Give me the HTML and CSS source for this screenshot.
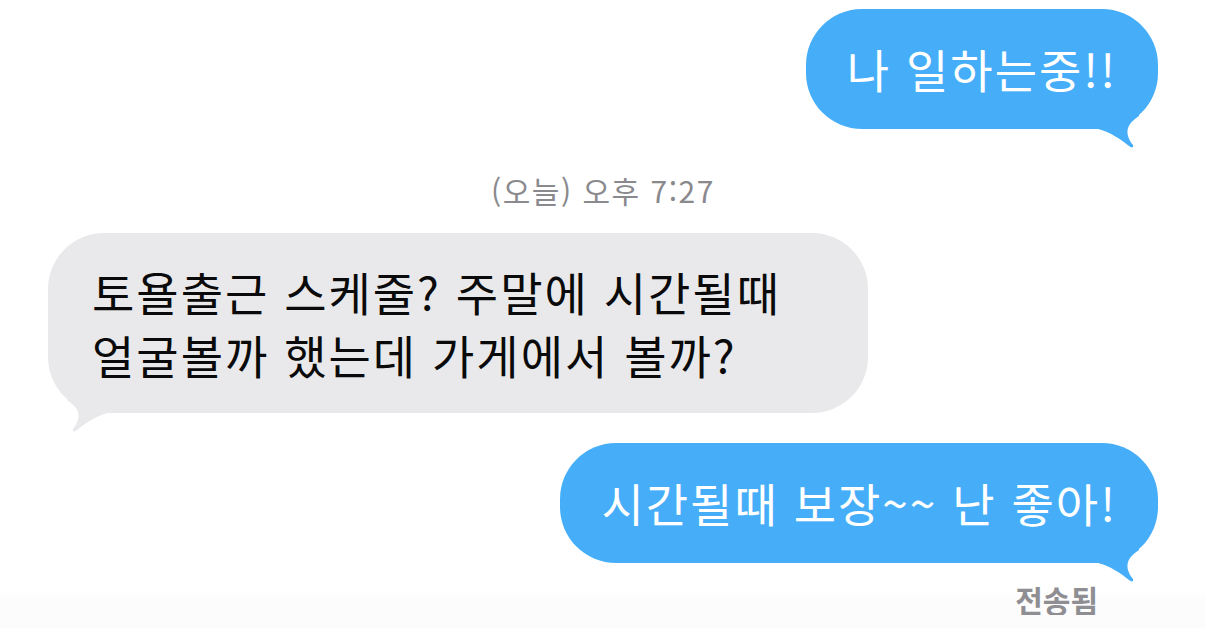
FILE: index.html
```html
<!DOCTYPE html>
<html lang="ko">

<head>
    <meta charset="UTF-8">
    <meta name="viewport" content="width=device-width, initial-scale=1.0">
    <title>메시지</title>
    <link rel="stylesheet" href="styles.css">
</head>

<body>
    <main class="chat">
        <div class="bubble sent">
            나 일하는중!!
            <svg class="tail" viewBox="0 0 60 40" aria-hidden="true">
                <path d="M0,0 L0,20 C12,23 24,31 31,37 C33,39 36,39 35,36 C30,30 27,22 32,15 C34,12 37,10 41,7 L41,0 Z" />
            </svg>
        </div>

        <div class="stamp">(오늘) 오후 7:27</div>

        <div class="bubble received">
            토욜출근 스케줄? 주말에 시간될때 얼굴볼까 했는데 가게에서 볼까?
            <svg class="tail" viewBox="0 0 60 40" aria-hidden="true">
                <path d="M0,0 L0,20 C12,23 24,31 31,37 C33,39 36,39 35,36 C30,30 27,22 32,15 C34,12 37,10 41,7 L41,0 Z" />
            </svg>
        </div>

        <div class="bubble sent second">
            시간될때 보장~~ 난 좋아!
            <svg class="tail" viewBox="0 0 60 40" aria-hidden="true">
                <path d="M0,0 L0,20 C12,23 24,31 31,37 C33,39 36,39 35,36 C30,30 27,22 32,15 C34,12 37,10 41,7 L41,0 Z" />
            </svg>
        </div>

        <div class="status">전송됨</div>
    </main>
</body>

</html>
```

FILE: styles.css
```css
/* 대화 화면 기본 */
html {
    background: linear-gradient(#fff 590px, #fcfcfc 602px);
    min-height: 100%;
}

body {
    margin: 0;
    font-family: "Noto Sans CJK KR", "Noto Sans", sans-serif;
    color: #000;
}

.chat {
    display: flex;
    flex-direction: column;
    padding: 9px 48px 0;
}

/* 말풍선 */
.bubble {
    position: relative;
    max-width: 732px;
    padding: 28px 41px 29px 41px;
    border-radius: 56px;
    font-size: 46px;
    line-height: 63px;
    letter-spacing: 2px;
    word-break: keep-all;
}

/* 꼬리: 말풍선 아래 모서리에 겹쳐 그림 */
.bubble .tail {
    position: absolute;
    right: 0;
    bottom: -20px;
    width: 60px;
    height: 40px;
}

.sent {
    align-self: flex-end;
    background-color: #46aef9;
    color: #fff;
}

.sent .tail path {
    fill: #46aef9;
}

.received {
    align-self: flex-start;
    margin-top: 26px;
    padding: 27px 44px;
    background-color: #e9e9eb;
    color: #0a0a0a;
}

.received .tail {
    right: auto;
    left: 0;
    transform: scaleX(-1);
}

.received .tail path {
    fill: #e9e9eb;
}

.second {
    margin-top: 30px;
}

/* 시간 표시, 전송 상태 */
.stamp {
    margin-top: 44px;
    text-align: center;
    font-size: 30px;
    line-height: 34px;
    letter-spacing: 1.5px;
    color: #8a8a8e;
}

.status {
    align-self: flex-end;
    margin: 20px 60px 0 0;
    font-size: 30px;
    font-weight: 600;
    line-height: 32px;
    color: #8e8e93;
}
```
